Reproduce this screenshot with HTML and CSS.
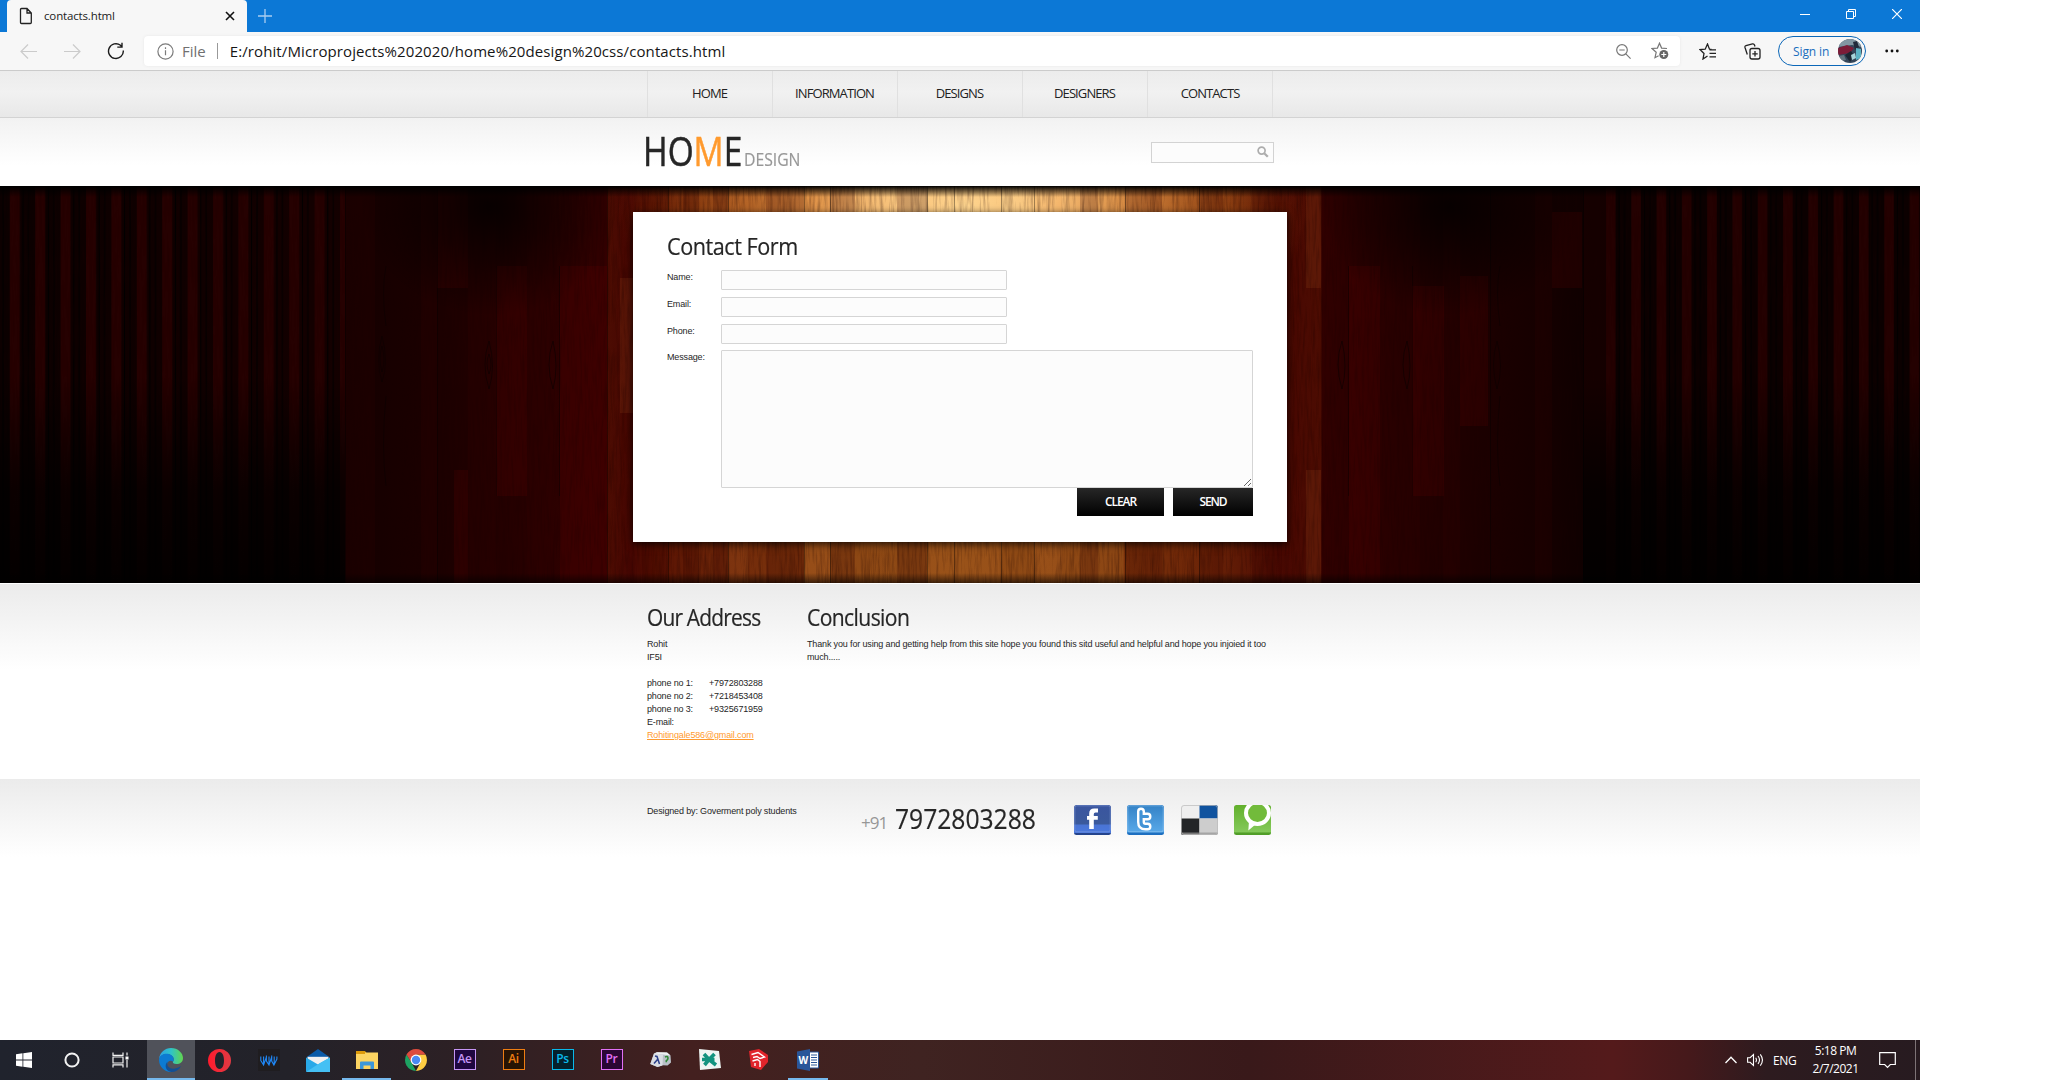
FILE: index.html
```html
<!DOCTYPE html>
<html lang="en">
<head>
<meta charset="utf-8">
<title>contacts.html</title>
<link rel="stylesheet" href="styles.css">
</head>
<body>
<div class="screen">
  <div class="tabbar">
    <div class="tab">
      <svg width="14" height="18" viewBox="0 0 14 18" fill="none" stroke="#222" stroke-width="1.3"><path d="M1.5 2.5a1 1 0 0 1 1-1H8L12.3 6v9.500a1 1 0 0 1-1 1h-8.800a1 1 0 0 1-1-1zM8 1.500V6h4.300"/></svg>
      <span class="tab-title">contacts.html</span>
      <svg width="10" height="10" viewBox="0 0 10 10" stroke="#111" stroke-width="1.6"><path d="M1 1l8 8M9 1L1 9"/></svg>
    </div>
    <svg class="newtab" width="14" height="14" viewBox="0 0 14 14" stroke="#a9cdf0" stroke-width="1.3"><path d="M7 0v14M0 7h14"/></svg>
    <div class="winbtns">
      <svg width="10" height="10" viewBox="0 0 10 10" stroke="#fff"><path d="M0 5.500h10"/></svg>
      <svg width="10" height="10" viewBox="0 0 10 10" stroke="#fff" fill="none"><path d="M.5 2.500h7v7h-7zM2.500 2.500v-2h7v7h-2"/></svg>
      <svg width="10" height="10" viewBox="0 0 10 10" stroke="#fff" stroke-width="1.200"><path d="M0 0l10 10M10 0L0 10"/></svg>
    </div>
  </div>
  <div class="toolbar">
    <svg class="ic-back" width="17" height="15" viewBox="0 0 17 15" fill="none" stroke="#cbcbcb" stroke-width="1.200"><path d="M1 7.500h16M8 .5l-7 7 7 7"/></svg>
    <svg class="ic-fwd" width="17" height="15" viewBox="0 0 17 15" fill="none" stroke="#cbcbcb" stroke-width="1.200"><path d="M16 7.500H0M9 .5l7 7-7 7"/></svg>
    <svg class="ic-reload" width="18" height="18" viewBox="0 0 18 18" fill="none" stroke="#1b1b1b" stroke-width="1.400"><path d="M16.300 8.500a7.400 7.400 0 1 1-2.800-5.200l1.300 1.500M15 .8v4.300h-4.700"/></svg>
    <div class="address">
      <svg width="17" height="17" viewBox="0 0 17 17" fill="none" stroke="#7b7b7b" stroke-width="1.200"><circle cx="8.500" cy="8.500" r="7.600"/><path d="M8.500 7.300v5M8.500 4.300v1.600"/></svg>
      <span class="scheme">File</span><i class="sep"></i>
      <span class="url">E:/rohit/Microprojects%202020/home%20design%20css/contacts.html</span>
      <svg class="ic-zoom" width="15" height="15" viewBox="0 0 15 15" fill="none" stroke="#777" stroke-width="1.200"><circle cx="6" cy="6" r="5.300"/><path d="M3.300 6h5.400M9.800 9.800l4.800 4.800"/></svg>
      <svg class="ic-star" width="18" height="18" viewBox="0 0 18 18"><path d="M16 6.500l-5.400-.4L8.500 1.200l-2.100 4.900L1 6.500l4.200 3.800-1.200 5.400 3.600-2" fill="none" stroke="#777" stroke-width="1.200"/><circle cx="12.800" cy="12.500" r="4.500" fill="#666"/><path d="M12.800 10v5M10.300 12.500h5" stroke="#fff" stroke-width="1.200"/></svg>
    </div>
    <svg class="ic-fav" width="18" height="17" viewBox="0 0 18 17" fill="none" stroke="#222" stroke-width="1.300"><path d="M12.500 6.500l-2-.3L8.500 1 6.200 6.200 1 6.500l4 4L4 16l4.500-3M10.500 6.800H17M10.500 10.300H17M10.500 13.800H17"/></svg>
    <svg class="ic-coll" width="17" height="17" viewBox="0 0 17 17" fill="none" stroke="#222" stroke-width="1.300"><rect x="6" y="5.500" width="10" height="10.500" rx="2"/><path d="M11 8v5.500M8.300 10.800h5.400M3.300 11.500L1 4.500Q.6 3 2 2.500L8.500.9Q10 .6 10.500 2l.5 1.500"/></svg>
    <div class="signin">Sign in
      <svg width="24" height="24" viewBox="0 0 24 24"><defs><clipPath id="av"><circle cx="12" cy="12" r="12"/></clipPath><filter id="soft"><feGaussianBlur stdDeviation=".7"/></filter></defs><g clip-path="url(#av)"><rect width="24" height="24" fill="#34465a"/><g filter="url(#soft)"><path d="M0 0h24v8l-10-2L0 8z" fill="#8297a3"/><path d="M0 9l9-3 7 3-4 5-12 2z" fill="#7c1c38"/><path d="M15 3l4-1 2 6-4 3z" fill="#222c3a"/><path d="M18 9l5 1v9l-5 2z" fill="#5bb3c5"/><path d="M7 16l6-4 3 5-4 6z" fill="#1b2733"/><path d="M0 17l6-1 2 5-5 1z" fill="#64747f"/><path d="M13 16l4-2 1 5-4 2z" fill="#a9d4da"/></g></g></svg>
    </div>
    <svg class="ic-more" width="14" height="4" viewBox="0 0 14 4" fill="#111"><circle cx="1.700" cy="2" r="1.400"/><circle cx="7" cy="2" r="1.400"/><circle cx="12.300" cy="2" r="1.400"/></svg>
  </div>

  <div class="nav"><a>HOME</a><a>INFORMATION</a><a>DESIGNS</a><a>DESIGNERS</a><a>CONTACTS</a></div>

  <div class="header">
    <div class="logo"><span class="home">HO<em>M</em>E</span><span class="design">DESIGN</span></div>
    <div class="search"><svg width="12" height="12" viewBox="0 0 12 12" fill="none" stroke="#adadad"><circle cx="4.600" cy="4.600" r="3.500" stroke-width="1.700"/><path d="M7.200 7.200l3.600 3.600" stroke-width="2.300"/></svg></div>
  </div>

  <div class="stage">
    <svg class="wood" width="1920" height="397" viewBox="0 0 1920 397">
      <defs>
        <linearGradient id="base"><stop offset="0" stop-color="#0b0000"/><stop offset=".18" stop-color="#140000"/><stop offset=".23" stop-color="#1c0000"/><stop offset=".27" stop-color="#260000"/><stop offset=".316" stop-color="#340100"/><stop offset=".3165" stop-color="#4c0c02"/><stop offset=".329" stop-color="#460602"/><stop offset=".34" stop-color="#561002"/><stop offset=".38" stop-color="#70290a"/><stop offset=".4185" stop-color="#7c340c"/><stop offset=".419" stop-color="#8c4614"/><stop offset=".5" stop-color="#8f4b15"/><stop offset=".585" stop-color="#8c4614"/><stop offset=".5855" stop-color="#7a320b"/><stop offset=".63" stop-color="#6a2307"/><stop offset=".67" stop-color="#480802"/><stop offset=".688" stop-color="#4c0c02"/><stop offset=".6885" stop-color="#300000"/><stop offset=".73" stop-color="#250000"/><stop offset=".8" stop-color="#160000"/><stop offset=".84" stop-color="#0b0000"/><stop offset="1" stop-color="#0b0000"/></linearGradient>
        <radialGradient id="lamp" gradientUnits="userSpaceOnUse" cx="0" cy="0" r="1" gradientTransform="translate(965 20) scale(350 150)"><stop offset="0" stop-color="#ffdc98"/><stop offset=".25" stop-color="#fcc57c" stop-opacity=".95"/><stop offset=".48" stop-color="#df9044" stop-opacity=".9"/><stop offset=".75" stop-color="#a8561a" stop-opacity=".6"/><stop offset="1" stop-color="#7a2a05" stop-opacity="0"/></radialGradient>
        <linearGradient id="drop" x2="0" y2="1"><stop offset="0"/><stop offset=".25" stop-opacity=".75"/><stop offset="1" stop-opacity="0"/></linearGradient>
        <linearGradient id="rise" x2="0" y2="1"><stop offset="0" stop-opacity="0"/><stop offset=".55" stop-opacity=".7"/><stop offset="1" stop-opacity=".9"/></linearGradient>
        <linearGradient id="foot" x2="0" y2="1"><stop offset="0" stop-opacity="0"/><stop offset="1" stop-opacity=".6"/></linearGradient>
        <radialGradient id="dim"><stop offset="0" stop-opacity=".8"/><stop offset="1" stop-opacity="0"/></radialGradient>
        <pattern id="stripL" width="25.400" height="397" patternUnits="userSpaceOnUse"><rect x="9.800" width="10" height="397" fill="#260101"/><path d="M3 0v397M23 0v397" stroke="#000"/></pattern>
        <pattern id="stripR" x="1596.200" width="25.300" height="397" patternUnits="userSpaceOnUse"><rect x="9.800" width="9.500" height="397" fill="#240101"/><path d="M3 0v397M23 0v397" stroke="#000"/></pattern>
        <filter id="grain" x="0" y="0" width="100%" height="100%" color-interpolation-filters="sRGB"><feTurbulence type="fractalNoise" baseFrequency=".4 .03" numOctaves="3" seed="7"/><feColorMatrix values="0 0 0 0 .1  0 0 0 0 0  0 0 0 0 0  2 0 0 0 -.85"/></filter>
      </defs>
      <rect width="1920" height="397" fill="url(#base)"/>
      <rect width="345" height="397" fill="url(#stripL)"/>
      <rect x="1606" width="314" height="397" fill="url(#stripR)"/>
      <rect x="607" width="706" height="170" fill="url(#lamp)"/>
      <g fill="#300" opacity=".22"><path d="M345 0h30v397h-30zM421 0h16v397h-16zM468 0h28v397h-28zM527 0h26v397h-26zM591 0h16v397h-16zM642 0h26v397h-26zM683 0h16v397h-16zM713 0h15v397h-15zM766 0h38v397h-38zM830 0h25v397h-25zM897 0h30v397h-30zM1080 0h18v397h-18zM1125 0h37v397h-37zM1199 0h24v397h-24zM1252 0h30v397h-30zM1380 0h40v397h-40zM1443 0h17v397h-17zM1535 0h17v397h-17zM1584 0h22v397h-22z"/></g>
      <g fill="#ff9b40" opacity=".09"><path d="M804 0h26v397h-26zM927 0h75v397h-75zM1034 0h28v397h-28zM728 0h20v397h-20zM620 92h13v135h-13zM1306 0h15v102h-15zM1306 284h15v113h-15z"/></g>
      <g fill="#800" opacity=".13"><path d="M437 0h31v102h-31zM454 284h14v113h-14zM496 80h31v230h-31zM560 80h47v317h-47zM576 146h15v90h-15zM1349 80h31v317h-31zM1412 100h32v210h-32zM1460 90h28v150h-28zM1552 26h30v76h-30z"/></g>
      <g stroke="#000" opacity=".35"><path d="M345.500 0v397M437.500 0v397M496.500 80v230M559.500 80v230M607.500 0v397M668.500 0v397M728.500 0v397M804.500 0v397M830.500 0v397M927.500 0v397M954.500 0v397M1001.500 0v397M1034.500 0v397M1125.500 0v397M1199.500 0v397M1348.500 80v230M1412.500 80v230M1490.500 0v397M1583.500 0v397"/></g>
      <g fill="none" stroke="#0b0000" opacity=".6"><path d="M382 150q-7 25 0 46q7-20 0-46M382 160q-4 12 0 26q4-12 0-26M489 155q-8 23 0 48q7-22 0-48M489 168q-4 9 0 20q4-9 0-20M553 155q-8 23 0 48q6-22 0-48M1342 155q-8 23 0 48q6-22 0-48M1407 155q-8 23 0 48q6-22 0-48M1497 155q-7 23 0 48q7-22 0-48M386 80q-5 25 0 60M386 210q-5 50 0 90M1500 80q-5 25 0 60M1500 210q-5 50 0 90"/></g>
      <rect width="1920" height="397" filter="url(#grain)" opacity=".32"/>
      <ellipse cx="490" cy="20" rx="130" ry="110" fill="url(#dim)"/>
      <ellipse cx="1450" cy="20" rx="130" ry="110" fill="url(#dim)"/>
      <rect y="190" width="345" height="207" fill="url(#rise)"/>
      <rect x="1583" y="190" width="337" height="207" fill="url(#rise)"/>
      <rect width="1920" height="11" fill="url(#drop)"/>
      <rect y="387" width="1920" height="10" fill="url(#foot)"/>
    </svg>
    <form class="card">
      <h2 class="h-form">Contact Form</h2>
      <label class="row"><span>Name:</span><input type="text"></label>
      <label class="row"><span>Email:</span><input type="text"></label>
      <label class="row"><span>Phone:</span><input type="text"></label>
      <label class="row message"><span>Message:</span><textarea></textarea></label>
      <div class="buttons"><a class="clear">CLEAR</a><a class="send">SEND</a></div>
    </form>
  </div>

  <div class="info">
    <div class="addr">
      <h2 class="h-addr">Our Address</h2>
      <p>Rohit<br>IF5I</p>
      <dl><dt>phone no 1:</dt><dd>+7972803288</dd><dt>phone no 2:</dt><dd>+7218453408</dd><dt>phone no 3:</dt><dd>+9325671959</dd></dl>
      <p>E-mail:<br><a class="mail">Rohitingale586@gmail.com</a></p>
    </div>
    <div>
      <h2 class="h-conc">Conclusion</h2>
      <p>Thank you for using and getting help from this site hope you found this sitd useful and helpful and hope you injoied it too<br>much.....</p>
    </div>
  </div>

  <div class="footer">
    <span>Designed by: Goverment poly students</span>
    <div class="phone"><small>+91</small><b>7972803288</b></div>
    <div class="social">
      <svg width="37" height="30" viewBox="0 0 37 30"><defs><linearGradient id="fb" x2="0" y2="1"><stop offset="0" stop-color="#3a559f"/><stop offset=".64" stop-color="#3b5a9c"/><stop offset=".66" stop-color="#4a74d4"/><stop offset=".92" stop-color="#4a78dd"/><stop offset=".93" stop-color="#24448c"/></linearGradient></defs><rect width="37" height="30" rx="2.500" fill="url(#fb)"/><rect x=".8" y=".8" width="35.400" height="26" rx="2" fill="none" stroke="#8ba5de" stroke-opacity=".5"/><path d="M24 3.500v4h-2.500q-1.700 0-1.700 1.500v2h4v3.800h-4V24h-4.600v-9.200H13V11h2.200V8.500q0-5 5-5z" fill="#fff"/></svg>
      <svg width="37" height="30" viewBox="0 0 37 30"><defs><linearGradient id="tw" x2="0" y2="1"><stop offset="0" stop-color="#3482c6"/><stop offset=".9" stop-color="#58a8e8"/><stop offset=".93" stop-color="#1d6fc0"/></linearGradient></defs><rect width="37" height="30" rx="2.500" fill="url(#tw)"/><rect x=".8" y=".8" width="35.400" height="26" rx="2" fill="none" stroke="#a5d2f5" stroke-opacity=".5"/><path d="M14 6.500v10.500q0 4.500 4.500 4.500h2M14 11.500h6.500" fill="none" stroke="#fff" stroke-width="8" stroke-linecap="round"/><path d="M14 6.500v10.500q0 4.500 4.500 4.500h2M14 11.500h6.500" fill="none" stroke="#4293d6" stroke-width="3.200" stroke-linecap="round"/></svg>
      <svg width="37" height="30" viewBox="0 0 37 30"><defs><clipPath id="dl"><rect width="37" height="30" rx="2.500"/></clipPath></defs><g clip-path="url(#dl)"><path d="M0 0h18.500v13.500H0z" fill="#efefef"/><path d="M18.500 0H37v13.500H18.500z" fill="#10539f"/><path d="M0 13.500h18.500V30H0z" fill="#232527"/><path d="M18.500 13.500H37V30H18.500z" fill="#cdcdcd"/><path d="M0 27.500h18.500V30H0z" fill="#777"/><path d="M18.500 27.500H37V30H18.500z" fill="#a5a5a5"/></g><rect x=".5" y=".5" width="36" height="29" rx="2.500" fill="none" stroke="#bbb" stroke-opacity=".7"/></svg>
      <svg width="37" height="30" viewBox="0 0 37 30"><defs><linearGradient id="tc" x2="0" y2="1"><stop offset="0" stop-color="#62b02c"/><stop offset=".9" stop-color="#84c95a"/><stop offset=".93" stop-color="#519e28"/></linearGradient><clipPath id="tcc"><rect width="37" height="30" rx="2.500"/></clipPath></defs><g clip-path="url(#tcc)"><rect width="37" height="30" fill="url(#tc)"/><path d="M15 16l-.7 9.500 7.200-6z" fill="#fff"/><ellipse cx="23.500" cy="8" rx="11.500" ry="11" fill="#72bb3b" stroke="#fff" stroke-width="4"/></g></svg>
    </div>
  </div>

  <div class="taskbar">
    <div class="cell"><svg width="16" height="16" viewBox="0 0 16 16" fill="#fff"><path d="M0 2.200l6.500-.9v6.300H0zM7.300 1.200L16 0v7.600H7.300zM0 8.400h6.500v6.300L0 13.800zM7.300 8.400H16V16l-8.700-1.200z"/></svg></div>
    <div class="cell"><svg width="16" height="16" viewBox="0 0 16 16"><circle cx="8" cy="8" r="6.600" fill="none" stroke="#f2f2f2" stroke-width="2"/></svg></div>
    <div class="cell"><svg width="17" height="16" viewBox="0 0 17 16" fill="none" stroke="#f2f2f2" stroke-width="1.200"><path d="M1 .5v2.800h10V.5M1 15.500v-2.700h10v2.700M1 5h10v6H1zM15 .5v3M15 8v7.500"/><path d="M13.500 4.500h3v3h-3z" fill="#fff" stroke="none"/></svg></div>
    <div class="cell active on"><svg width="24" height="24" viewBox="0 0 24 24"><defs><linearGradient id="e1"><stop offset="0" stop-color="#2b9fe4"/><stop offset=".5" stop-color="#2fc3c9"/><stop offset="1" stop-color="#62d64e"/></linearGradient></defs><path d="M0 11C1 4 6 0 12 0c7 0 12 5 12 10 0 4-3 6-6.500 6-3 0-4-1.200-3.500-2.200.6-1 .7-1.600.7-2.500C14.700 8 11 6 7.500 6 4 6 1 8 0 11z" fill="url(#e1)"/><path d="M0 12c0-4 3.500-6.300 7.500-6.300 4 0 7.200 2.300 7.200 5.600 0 1-.3 2-.7 2.500-1.500-2-6-1-6 3 0 3 3 6.500 6 7C6 25 0 19 0 12z" fill="#0c7bd2"/><path d="M8.500 13.500c-1.500 5 3 8 7.500 7 2.500-.5 4.500-1.500 6-2.500-2 4-5.500 6-9.500 6-5-.5-8-6-4-10.500z" fill="#134f93"/></svg></div>
    <div class="cell"><svg width="23" height="23" viewBox="0 0 23 23"><defs><linearGradient id="op"><stop offset="0" stop-color="#ff1b2d"/><stop offset="1" stop-color="#e03a43"/></linearGradient></defs><path fill-rule="evenodd" fill="url(#op)" d="M11.500 0a11.500 11.500 0 1 0 0 23a11.500 11.500 0 0 0 0-23zM11.500 3c3 0 4.500 4 4.500 8.500S14.500 20 11.500 20 7 16 7 11.500 8.500 3 11.500 3z"/></svg></div>
    <div class="cell"><svg width="22" height="22" viewBox="0 0 22 22"><rect width="22" height="22" fill="#1f1d20"/><path d="M2.800 7.500v4L5.600 16 8.400 8V6.500M8.400 7v5l2.600 4 2.700-8V6.500M13.700 7v5l2.200 4 3-6V7.500M5.600 7.500V16M11 7.500V16M16.200 7.500V16" fill="none" stroke="#1f87f5" stroke-width="1.100"/></svg></div>
    <div class="cell"><svg width="24" height="23" viewBox="0 0 24 23"><path d="M0 8.500L12 0l12 8.500z" fill="#0a5ba8"/><path d="M1.500 7.800h21V16h-21z" fill="#f1f1f1"/><path d="M0 8.500l12 7L24 8.500V22a1 1 0 0 1-1 1H1a1 1 0 0 1-1-1z" fill="#29a9e8"/><path d="M0 23l14-9 10-5.500V23z" fill="#45c0f4"/></svg></div>
    <div class="cell on"><svg width="22" height="18" viewBox="0 0 22 18"><path d="M0 0h9l1.500 2H0z" fill="#e4a10d"/><path d="M0 1.500h22V18H0z" fill="#fcd462"/><path d="M0 0h9v3H0z" fill="#dd9a0a"/><path d="M4 18v-6.500q0-1 1-1h12q1 0 1 1V18h-3.500v-3.500h-7V18z" fill="#3c97da"/></svg></div>
    <div class="cell"><svg width="22" height="22" viewBox="0 0 22 22"><path d="M1.500 5.500L6.500 13.500 11 22A11 11 0 0 1 1.500 5.500z" fill="#1da362"/><path d="M20.500 5.500A11 11 0 0 1 11 22l4.500-8.500L11 5.500z" fill="#ffcd42"/><path d="M1.500 5.500L6.500 13.500 11 11V5.500h9.500A11 11 0 0 0 1.500 5.500z" fill="#dd4b3e"/><circle cx="11" cy="11" r="5.400" fill="#fff"/><circle cx="11" cy="11" r="4.200" fill="#4a8af4"/></svg></div>
    <div class="cell"><div class="adobe ae">Ae</div></div>
    <div class="cell"><div class="adobe ai">Ai</div></div>
    <div class="cell"><div class="adobe ps">Ps</div></div>
    <div class="cell"><div class="adobe pr">Pr</div></div>
    <div class="cell"><svg class="up" width="21" height="15" viewBox="0 0 21 15"><path d="M4 1.500L7 .3l10 .3 3.500 2.900.5 7-3.500 3-5-.3-5 1.800L.3 12z" fill="#b9bfc7"/><path d="M4 1.500L7 .3l10 .3 3.500 2.900-7.500-1z" fill="#eef1f3"/><path d="M4 1.500l9 1-.5 11-5 1.500L.3 12z" fill="#d9dde3"/><path d="M5 4l2 .5 2.500 7.500M7.500 7.500L4 11.500" stroke="#2b3f8a" stroke-width="1.500" fill="none"/><path d="M15 5q3-1.500 3 1.300 0 1.500-1.700 2.500v1.500" stroke="#2f8a35" stroke-width="1.600" fill="none"/></svg></div>
    <div class="cell"><svg class="up" width="23" height="21" viewBox="0 0 23 21"><path d="M1 0l20 2 2 17-21 2z" fill="#eef5f3"/><path d="M11 10.500L6 5M11 10.500L16.500 5M11 10.500L6.500 16M11 10.500l7 5.500M11 10.500H4M11 10.500h5.500" fill="none" stroke="#12937f" stroke-width="3.600"/></svg></div>
    <div class="cell"><svg class="up" width="21" height="21" viewBox="0 0 21 21"><path d="M1 2l10-2 9 6v7l-7 8L3 18z" fill="#e1242b"/><path d="M3.500 5.500l6.500-2 6.500 4.500-4.500 1.500L9 7.500l-4 1M4.500 12l5-1.500 2.500 2v5.500M7 17v-3" fill="none" stroke="#fff" stroke-width="1.400"/></svg></div>
    <div class="cell"><div class="word"><svg width="22" height="22" viewBox="0 0 22 22"><path d="M12 3h9.500v16H12z" fill="#fff" stroke="#2a5699"/><path d="M14 6h6M14 8.500h6M14 11h6M14 13.500h6M14 16h6" stroke="#2a5699"/><path d="M0 2.500L13 0v22L0 19.500z" fill="#2a5699"/><text x="1.500" y="15" font-size="10" font-weight="700" fill="#fff">W</text></svg></div></div>
    <div class="tray">
      <svg width="12" height="8" viewBox="0 0 12 8" fill="none" stroke="#fff" stroke-width="1.300"><path d="M.5 7L6 1.200 11.500 7"/></svg>
      <svg class="vol" width="17" height="14" viewBox="0 0 17 14" fill="none" stroke="#fff" stroke-width="1.100"><path d="M.6 4.700h2.500L6.500 1.500v11L3.100 9.300H.6zM8.700 4.700q1.500 2.300 0 4.600M11 3q3 4 0 8M13.300 1.300q4.300 5.700 0 11.400"/></svg>
      <span class="eng">ENG</span>
      <div class="clock">5:18 PM<br>2/7/2021</div>
      <svg class="note" width="17" height="17" viewBox="0 0 17 17" fill="none" stroke="#fff" stroke-width="1.200"><path d="M.7.7h15.600v11.800h-5L8.500 15.400l-2.800-2.900h-5z"/></svg>
    </div>
  </div>
</div>
</body>
</html>
```
FILE: styles.css
```css
* { box-sizing: border-box; }
body { margin: 0; background: #fff; overflow: hidden; font-family: "Open Sans", sans-serif; }
svg { display: block; flex: none; }
h2, p, dl, dd { margin: 0; }
.screen { width: 1920px; height: 1080px; display: flex; flex-direction: column; }

.tabbar { height: 32px; background: #0c78d6; display: flex; align-items: center; padding-left: 7px; flex: none; }
.tab { width: 240px; height: 32px; background: #f7f7f7; border-radius: 4px 4px 0 0; display: flex; align-items: center; padding: 0 12px; color: #222; font-size: 11.5px; letter-spacing: -.15px; }
.tab-title { flex: 1; padding-left: 11px; padding-bottom: 1px; }
.newtab { margin-left: 11px; }
.winbtns { margin-left: auto; display: flex; gap: 36px; padding-right: 18px; padding-bottom: 4px; }

.toolbar { height: 39px; background: #f7f7f7; border-bottom: 1px solid #cbcbcb; display: flex; align-items: center; flex: none; padding-left: 20px; }
.ic-fwd { margin-left: 27px; }
.ic-reload { margin-left: 26px; }
.address { margin-left: 19px; width: 1536px; height: 30px; background: #fff; border-radius: 4px; display: flex; align-items: center; padding: 0 11px 0 13px; box-shadow: 0 0 3px #e6e6e6; font-size: 15px; color: #161616; }
.scheme { color: #707070; margin-left: 8px; }
.sep { width: 1px; height: 16px; background: #999; margin: 0 12px 0 11px; }
.url { letter-spacing: .1px; }
.ic-zoom { margin-left: auto; }
.ic-star { margin-left: 20px; }
.ic-fav { margin-left: 19px; }
.ic-coll { margin-left: 27px; }
.signin { margin-left: 17px; width: 88px; height: 30px; border: 1px solid #0b67b8; border-radius: 15px; display: flex; align-items: center; justify-content: space-between; padding: 0 3px 0 14px; color: #1a6dbd; font-size: 12px; letter-spacing: -.1px; }
.ic-more { margin-left: 19px; }

.nav { height: 47px; flex: none; display: flex; justify-content: center; background: linear-gradient(#ececec, #f1f1f1 45%, #e8e8e8); border-bottom: 1px solid #d3d3d3; font-size: 13px; letter-spacing: -.9px; color: #222; }
.nav a { width: 125px; border-left: 1px solid #e0e0e0; text-align: center; line-height: 45px; padding-right: 1px; }
.nav a:last-child { width: 126px; border-right: 1px solid #e0e0e0; padding: 0; }
.header { height: 68px; flex: none; display: flex; justify-content: space-between; padding: 15px 646px 0 647px; background: linear-gradient(#f2f2f2, #fff 70%); }
.logo { display: flex; align-items: baseline; line-height: 36px; color: #262626; white-space: nowrap; }
.home { width: 97px; font-size: 40px; transform: scaleX(.835); transform-origin: 0 0; margin-left: -4px; -webkit-text-stroke: .5px; }
.home em { font-style: normal; color: #ff9a2e; }
.design { margin-left: 4px; font-size: 18.5px; color: #979797; transform: scaleX(.85); transform-origin: 0 0; -webkit-text-stroke: .2px; }
.search { width: 123px; height: 21px; margin-top: 9px; border: 1px solid #d3d3d3; background: #fcfcfc; display: flex; justify-content: flex-end; padding: 3px 4px 0 0; }

.stage { height: 397px; flex: none; padding-top: 26px; position: relative; background: #000; }
.wood { position: absolute; left: 0; top: 0; }
.card { position: relative; width: 654px; height: 330px; margin: 0 auto; background: #fff; padding: 20px 34px 0; box-shadow: 0 2px 8px rgba(0,0,0,.8); }
h2 { font-weight: 400; font-size: 24px; line-height: 28px; color: #262626; white-space: nowrap; width: max-content; transform-origin: 0 0; -webkit-text-stroke: .2px; }
.h-form { letter-spacing: -.5px; margin-bottom: 10px; transform: scaleX(.9); }
.h-addr { letter-spacing: -.9px; margin-bottom: 6px; transform: scaleX(.87); }
.h-conc { letter-spacing: -.7px; margin-bottom: 6px; transform: scaleX(.88); }
.row, .info, .footer { font-family: "Liberation Sans", Arial, sans-serif; font-size: 9px; line-height: 13px; letter-spacing: -.15px; color: #262626; }
.info h2 { font-family: "Open Sans", sans-serif; }
.row { display: flex; margin-bottom: 7px; }
.row span { width: 54px; padding-top: 1px; }
input, textarea { appearance: none; margin: 0; padding: 0; background: #fcfcfc; border: 1px solid #d5d5d5; border-radius: 1px; }
input { width: 286px; height: 20px; }
textarea { width: 532px; height: 138px; resize: both; }
.message { margin: -1px 0 0; }
.buttons { display: flex; justify-content: flex-end; gap: 9px; font-size: 12px; font-weight: 600; letter-spacing: -1.1px; line-height: 27px; text-align: center; color: #fff; }
.buttons a { height: 28px; background: linear-gradient(#272727, #000); }
.clear { width: 87px; }
.send { width: 80px; }

.info { height: 196px; flex: none; display: grid; grid-template-columns: 160px 480px; padding: 19px 0 0 647px; background: linear-gradient(#ebebeb, #fff 44%); border-top: 1px solid #fff; }
.info p { white-space: nowrap; }
.info h2 { margin-bottom: 7px; }
.info dl { display: grid; grid-template-columns: 62px 90px; margin-top: 13px; }
.mail { color: #ff9a2e; text-decoration: underline; }
.footer { height: 261px; flex: none; display: grid; grid-template-columns: 214px 213px 200px; align-items: start; padding: 26px 0 0 647px; background: linear-gradient(#ebebeb, #fff 78px); }
.phone { font-family: "Open Sans", sans-serif; line-height: 28px; display: flex; align-items: baseline; margin-top: -1px; }
.phone small { font-size: 17px; letter-spacing: -1px; color: #979797; width: 34px; }
.phone b { font-weight: 400; font-size: 28px; letter-spacing: 0; transform: scaleX(.88); transform-origin: 0 0; -webkit-text-stroke: .2px; }
.social { display: flex; gap: 16.4px; }

.taskbar { height: 40px; flex: none; display: flex; background: linear-gradient(90deg, #20232d, #232229 15%, #2e2024 25%, #43201f 36%, #3f2321 48%, #39191a 65%, #541a1b 84%, #45191b 88%, #2d1b1f 92%, #271b20); }
.cell { width: 49px; display: flex; align-items: center; justify-content: center; }
.cell:nth-child(-n+3) { width: 48px; }
.cell:nth-child(4) { margin-left: 3px; width: 48px; }
.active { background: #50525a; }
.on { box-shadow: inset 0 -2px #76b9ed; }
.up { margin-top: -1px; }
.word { width: 40px; height: 40px; display: grid; place-items: center; box-shadow: inset 0 -2px #76b9ed; }
.adobe { width: 22px; height: 21px; border: 1.5px solid; font-size: 12px; line-height: 17px; text-align: center; font-weight: 600; margin-top: -1px; letter-spacing: -.3px; }
.ae { color: #c595f5; background: #1f0740; }
.ai { color: #ee7d12; background: #281404; }
.ps { color: #0ab9ea; background: #04202c; }
.pr { color: #e070f4; background: #2a0634; }
.tray { margin-left: auto; width: 195px; display: flex; align-items: center; color: #fff; font-size: 12px; }
.vol { margin-left: 10px; }
.eng { margin-left: 9px; letter-spacing: -.3px; }
.clock { width: 78px; text-align: center; line-height: 18px; letter-spacing: -.5px; }
.note { margin-left: 4px; }
.tray::after { content: ""; width: 1px; height: 40px; background: #7d7376; margin-left: 19px; }
```
